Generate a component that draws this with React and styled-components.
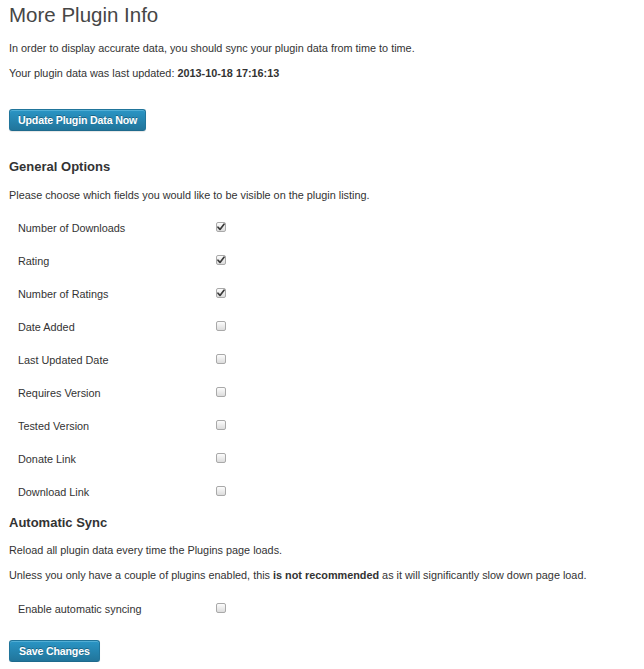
import React from "react";
import styled, { createGlobalStyle } from "styled-components";

const Global = createGlobalStyle`
  html, body { margin: 0; padding: 0; background: #fff; }
  body {
    font-family: "Liberation Sans", Arial, Helvetica, sans-serif;
    color: #333;
    font-size: 10.8px;
  }
`;

const Wrap = styled.div`
  padding: 0 9px;
  width: 644px;
  box-sizing: border-box;
`;

const Title = styled.h2`
  margin: 0 0 0.5px;
  font-size: 20.5px;
  line-height: 29px;
  font-weight: normal;
  color: #464646;
`;

const Para = styled.p`
  margin: 11.5px 0;
  font-size: 10.85px;
  line-height: 14px;
  color: #333;
  white-space: nowrap;
`;

const ButtonRow = styled.div`
  margin: ${(p) => p.$top}px 0 0;
  display: flex;
`;

const PrimaryButton = styled.button`
  height: 22px;
  padding: 0 ${(p) => p.$pad || 8}px;
  font-family: "Liberation Sans", Arial, sans-serif;
  font-size: 10.6px;
  font-weight: bold;
  letter-spacing: -0.15px;
  color: #fff;
  text-shadow: 0 -1px 0 rgba(0, 0, 0, 0.3);
  background: linear-gradient(to bottom, #2a95c5, #21759b);
  border: 1px solid #21759b;
  border-bottom-color: #1e6a8d;
  border-radius: 3px;
  box-shadow: inset 0 1px 0 rgba(120, 200, 230, 0.5), 0 1px 1px rgba(0,0,0,0.1);
  cursor: pointer;
`;

const Heading = styled.h3`
  margin: ${(p) => p.$top}px 0 0;
  font-size: 13px;
  line-height: 16px;
  font-weight: bold;
  color: #333;
`;

const Rows = styled.div`
  margin-top: ${(p) => p.$top}px;
  display: flex;
  flex-direction: column;
`;

const Row = styled.label`
  display: grid;
  grid-template-columns: 207px 1fr;
  align-items: center;
  height: 33px;
`;

const RowLabel = styled.span`
  padding-left: 9px;
  font-size: 10.85px;
  line-height: 14px;
  color: #333;
`;

const Box = styled.span`
  width: 10px;
  height: 10px;
  box-sizing: border-box;
  border: 1px solid #a9a9a9;
  border-radius: 2px;
  background: linear-gradient(to bottom, #fcfcfc, #dcdcdc);
  box-shadow: 0 1px 0 rgba(255,255,255,0.8);
  display: flex;
  align-items: center;
  justify-content: center;
  margin-top: -1px;
`;

const Check = ({ checked }) => (
  <Box>
    {checked && (
      <svg width="8" height="8" viewBox="0 0 8 8">
        <path d="M1 4.2 L3 6.4 L7 1.2" fill="none" stroke="#3a3a3a" strokeWidth="1.7" strokeLinecap="round" strokeLinejoin="round" />
      </svg>
    )}
  </Box>
);

const fields = [
  ["Number of Downloads", true],
  ["Rating", true],
  ["Number of Ratings", true],
  ["Date Added", false],
  ["Last Updated Date", false],
  ["Requires Version", false],
  ["Tested Version", false],
  ["Donate Link", false],
  ["Download Link", false],
];

export default function App() {
  return (
    <>
      <Global />
      <Wrap>
        <Title>More Plugin Info</Title>
        <Para>In order to display accurate data, you should sync your plugin data from time to time.</Para>
        <Para>
          Your plugin data was last updated: <b>2013-10-18 17:16:13</b>
        </Para>
        <ButtonRow $top={29}>
          <PrimaryButton>Update Plugin Data Now</PrimaryButton>
        </ButtonRow>

        <Heading $top={28}>General Options</Heading>
        <Para style={{ marginTop: 13 }}>Please choose which fields you would like to be visible on the plugin listing.</Para>
        <Rows $top={-2.5}>
          {fields.map(([label, checked]) => (
            <Row key={label}>
              <RowLabel>{label}</RowLabel>
              <Check checked={checked} />
            </Row>
          ))}
        </Rows>

        <Heading $top={7}>Automatic Sync</Heading>
        <Para>Reload all plugin data every time the Plugins page loads.</Para>
        <Para>
          Unless you only have a couple of plugins enabled, this <b>is not recommended</b> as it will significantly slow down page load.
        </Para>
        <Rows $top={-1.5}>
          <Row>
            <RowLabel>Enable automatic syncing</RowLabel>
            <Check checked={false} />
          </Row>
        </Rows>
        <ButtonRow $top={15}>
          <PrimaryButton $pad={9}>Save Changes</PrimaryButton>
        </ButtonRow>
      </Wrap>
    </>
  );
}
